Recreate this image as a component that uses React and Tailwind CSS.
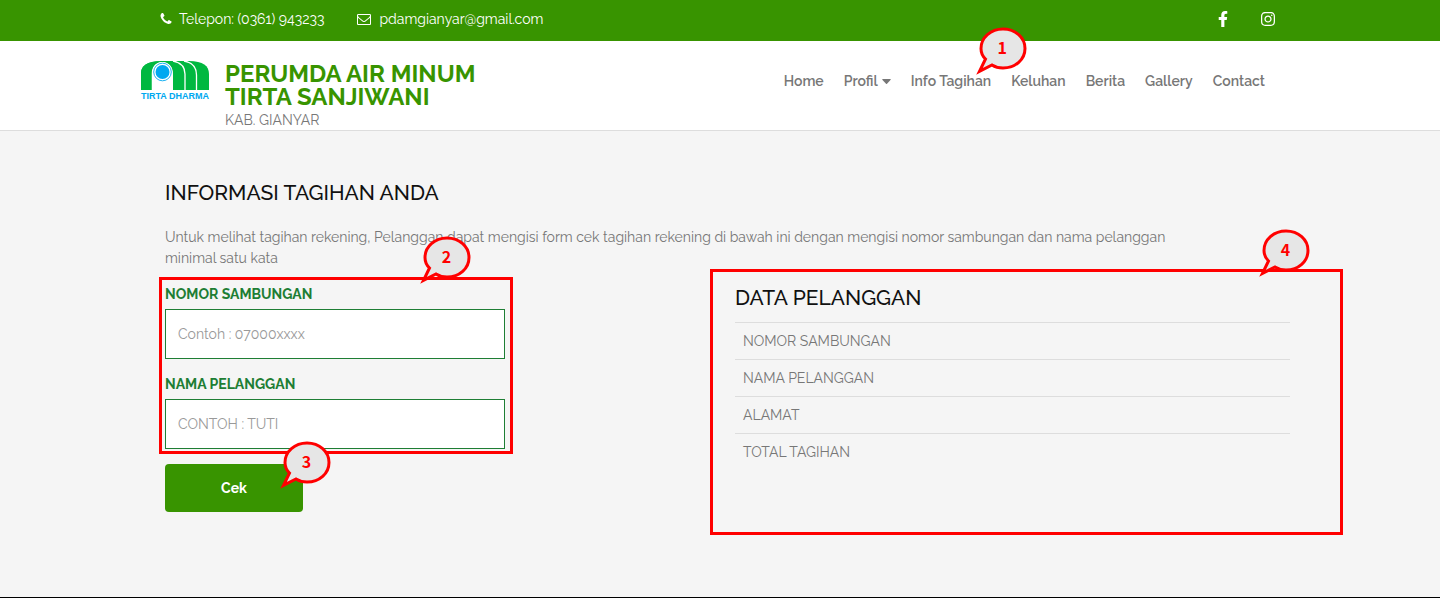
import { FaFacebookF, FaInstagram } from "react-icons/fa";

const navBefore = ["Home"];
const navAfter = ["Keluhan", "Berita", "Gallery", "Contact"];
const rows = ["NOMOR SAMBUNGAN", "NAMA PELANGGAN", "ALAMAT", "TOTAL TAGIHAN"];

function Callout({ number, className }) {
  return (
    <span className={`pointer-events-none absolute z-10 block h-12 w-[52px] ${className}`}>
      <svg viewBox="0 0 52 48" className="absolute inset-0 h-full w-full" aria-hidden="true">
        <path
          d="M9.500 32 C6.300 29 5 25.500 5 21.500 C5 10.600 14.800 2 27 2 C39.500 2 49 10.800 49 21.500 C49 32.500 39.500 41 27 41 C23 41 19 40 16 38 L3.500 44.300 Z"
          fill="#e6e6e6"
          stroke="#ff0000"
          strokeWidth="3"
          strokeMiterlimit="10"
        />
      </svg>
      <span className="relative block h-10 pl-px text-center font-['Noto_Sans_CJK_SC',sans-serif] text-base leading-10 font-bold text-[#ff0000]">
        {number}
      </span>
    </span>
  );
}

function PhoneIcon() {
  return (
    <svg viewBox="0 0 1792 1792" className="h-3.5 w-3.5" fill="currentColor" aria-hidden="true">
      <path d="M1600 1240q0 27-10 70.5t-21 68.5q-21 50-122 106-94 51-186 51-27 0-53-3.5t-57.5-12.5-47-14.5-55.5-20.5-49-18q-98-35-175-83-127-79-264-216t-216-264q-48-77-83-175-3-9-18-49t-20.5-55.5-14.5-47-12.5-57.5-3.5-53q0-92 51-186 56-101 106-122 25-11 68.5-21t70.5-10q14 0 21 3 18 6 53 76 11 19 30 54t35 63.5 31 53.5q3 4 17.5 25t21.5 35.5 7 28.5q0 20-28.5 50t-62 55-62 53-28.5 46q0 9 5 22.5t8.5 20.5 14 24 11.5 19q76 137 174 235t235 174q2 1 19 11.5t24 14 20.5 8.5 22.5 5q18 0 46-28.5t53-62 55-62 50-28.5q14 0 28.5 7t35.5 21.5 25 17.5q25 15 53.5 31t63.5 35 54 30q70 35 76 53 3 7 3 21z" />
    </svg>
  );
}

function EnvelopeIcon() {
  return (
    <svg viewBox="0 0 1792 1792" className="h-3.5 w-3.5" fill="currentColor" aria-hidden="true">
      <path d="M1664 1504v-768q-32 36-69 66-268 206-426 338-51 43-83 67t-86.5 48.5-102.5 24.5h-2q-48 0-102.5-24.5t-86.5-48.5-83-67q-158-132-426-338-37-30-69-66v768q0 13 9.5 22.5t22.5 9.5h1472q13 0 22.5-9.5t9.5-22.5zm0-1051v-24.5l-.5-13-3-12.5-5.5-9-9-7.5-14-2.5h-1472q-13 0-22.5 9.5t-9.5 22.5q0 168 147 284 193 152 401 317 6 5 35 29.5t46 37.5 44.5 31.5 50.5 27.5 43 9h2q20 0 43-9t50.5-27.5 44.5-31.5 46-37.5 35-29.5q208-165 401-317 54-43 100.5-115.5t46.5-131.5zm128-37v1088q0 66-47 113t-113 47h-1472q-66 0-113-47t-47-113v-1088q0-66 47-113t113-47h1472q66 0 113 47t47 113z" />
    </svg>
  );
}

function CaretIcon() {
  return (
    <svg viewBox="0 0 9 5" className="h-[5px] w-[9px]" fill="currentColor" aria-hidden="true">
      <path d="M.7 0h7.600q.6.2.4.8L5 4.700q-.5.4-1 0L.3.800Q.1.200.7 0z" />
    </svg>
  );
}

function Logo() {
  return (
    <span className="flex w-[68px] flex-col items-center">
      <svg viewBox="0 0 68 29" className="h-[29px] w-[68px]" aria-hidden="true">
        <path d="M0 29V12C0 5 6 0 20 0H48C62 0 68 5 68 13V29Z" fill="#00b840" />
        <path d="M10.500 29V13C10.500 6 14.500 1 21 1C28 1 32 6 32 13V29Z" fill="#fff" />
        <path d="M0 29V12C0 4.500 7 0.500 19 0.300C13 2.500 10.500 6.500 10.500 13V29Z" fill="#00b840" />
        <path d="M24 0.300C30.500 2 33 6.500 33 13V29H43.500V13C43.500 6 40 1 31 0.300Z" fill="#00b840" />
        <path d="M32 0C40.500 1.500 44 6.500 44 13V29M43 0C52 1.500 55.500 7 55.500 14V29" fill="none" stroke="#fff" strokeWidth="1.300" />
        <circle cx="21.500" cy="11" r="10" fill="#fff" />
        <circle cx="21.500" cy="11" r="8.800" fill="none" stroke="#00a8f0" strokeWidth="0.900" />
        <circle cx="21.500" cy="11" r="7" fill="#00a8f0" />
      </svg>
      <span className="font-['Liberation_Sans',sans-serif] text-[9px] leading-[13px] font-bold whitespace-nowrap text-[#00a8f0]">
        TIRTA DHARMA
      </span>
    </span>
  );
}

function Field({ id, label, placeholder }) {
  return (
    <div>
      <label htmlFor={id} className="block text-sm leading-5 font-bold text-[#1e7e34]">
        {label}
      </label>
      <input
        id={id}
        type="text"
        placeholder={placeholder}
        className="mt-[5px] block h-[50px] w-full border border-[#1e7e34] bg-white px-3 text-sm text-[#777] placeholder:text-[#999]"
      />
    </div>
  );
}

export default function App() {
  return (
    <div className="border-b border-black bg-[#f5f5f5] font-[Raleway,sans-serif] text-sm text-[#777]">
      <div className="bg-[#389400] text-white">
        <div className="mx-auto flex h-[41px] max-w-[1170px] items-center justify-between pr-[29px] pb-[3px] pl-6">
          <div className="flex items-center gap-[33px]">
            <a href="tel:0361943233" className="flex items-center gap-1.5">
              <PhoneIcon />
              Telepon: (0361) 943233
            </a>
            <a href="mailto:pdamgianyar@gmail.com" className="flex items-center gap-2">
              <EnvelopeIcon />
              pdamgianyar@gmail.com
            </a>
          </div>
          <div className="flex items-center gap-[29px] text-base">
            <a href="#facebook" aria-label="Facebook">
              <FaFacebookF />
            </a>
            <a href="#instagram" aria-label="Instagram">
              <FaInstagram />
            </a>
          </div>
        </div>
      </div>

      <header className="border-b border-[#ddd] bg-white">
        <div className="mx-auto flex h-[89px] max-w-[1170px] items-start justify-between pr-10 pl-1.5">
          <a href="#beranda" className="flex gap-4 pt-5">
            <Logo />
            <span className="block pt-px">
              <span className="block text-2xl leading-[23px] font-bold text-[#389400]">
                PERUMDA AIR MINUM
                <br />
                TIRTA SANJIWANI
              </span>
              <span className="block leading-6">KAB. GIANYAR</span>
            </span>
          </a>
          <nav className="flex gap-5 pt-[30px] leading-5 font-semibold">
            {navBefore.map((t) => (
              <a key={t} href={`#${t}`}>
                {t}
              </a>
            ))}
            <a href="#Profil" className="flex items-center gap-1">
              Profil <CaretIcon />
            </a>
            <a href="#tagihan" className="relative">
              Info Tagihan
              <Callout number={1} className="-top-11 left-[65px]" />
            </a>
            {navAfter.map((t) => (
              <a key={t} href={`#${t}`}>
                {t}
              </a>
            ))}
          </nav>
        </div>
      </header>

      <main className="mx-auto max-w-[1170px] pt-12 pr-[15px] pb-[85px] pl-[30px]">
        <h1 className="text-[21px] leading-7 font-medium text-[#111]">INFORMASI TAGIHAN ANDA</h1>
        <p className="mt-5 pr-24 leading-[21px]">
          Untuk melihat tagihan rekening, Pelanggan dapat mengisi form cek tagihan rekening di bawah ini dengan
          mengisi nomor sambungan dan nama pelanggan minimal satu kata
        </p>
        <div className="mt-[15px] grid grid-cols-2 gap-[15px]">
          <form>
            <div className="relative flex max-w-[340px] flex-col gap-[15px]">
              <Field id="nomor" label="NOMOR SAMBUNGAN" placeholder="Contoh : 07000xxxx" />
              <Field id="nama" label="NAMA PELANGGAN" placeholder="CONTOH : TUTI" />
              <div className="pointer-events-none absolute -top-[7px] -right-2 -bottom-[5px] -left-1.5 border-3 border-[#ff0000]" />
              <Callout number={2} className="-top-12 left-[255px]" />
            </div>
            <div className="relative mt-[15px] w-[138px]">
              <button type="button" className="block h-12 w-full rounded bg-[#389400] font-bold text-white">
                Cek
              </button>
              <Callout number={3} className="-top-[23px] left-[115px]" />
            </div>
          </form>
          <section className="relative">
            <h2 className="text-[21px] leading-7 font-medium text-[#111]">DATA PELANGGAN</h2>
            <table className="mt-2.5 w-full">
              <tbody>
                {rows.map((t) => (
                  <tr key={t} className="h-[37px] border-t border-[#ddd]">
                    <th scope="row" className="px-2 text-left font-normal">
                      {t}
                    </th>
                    <td />
                  </tr>
                ))}
              </tbody>
            </table>
            <div className="pointer-events-none absolute -top-[15px] -right-[53px] -bottom-[23px] -left-[25px] border-3 border-[#ff0000]" />
            <Callout number={4} className="-top-[55px] -right-[21px]" />
          </section>
        </div>
      </main>
    </div>
  );
}
